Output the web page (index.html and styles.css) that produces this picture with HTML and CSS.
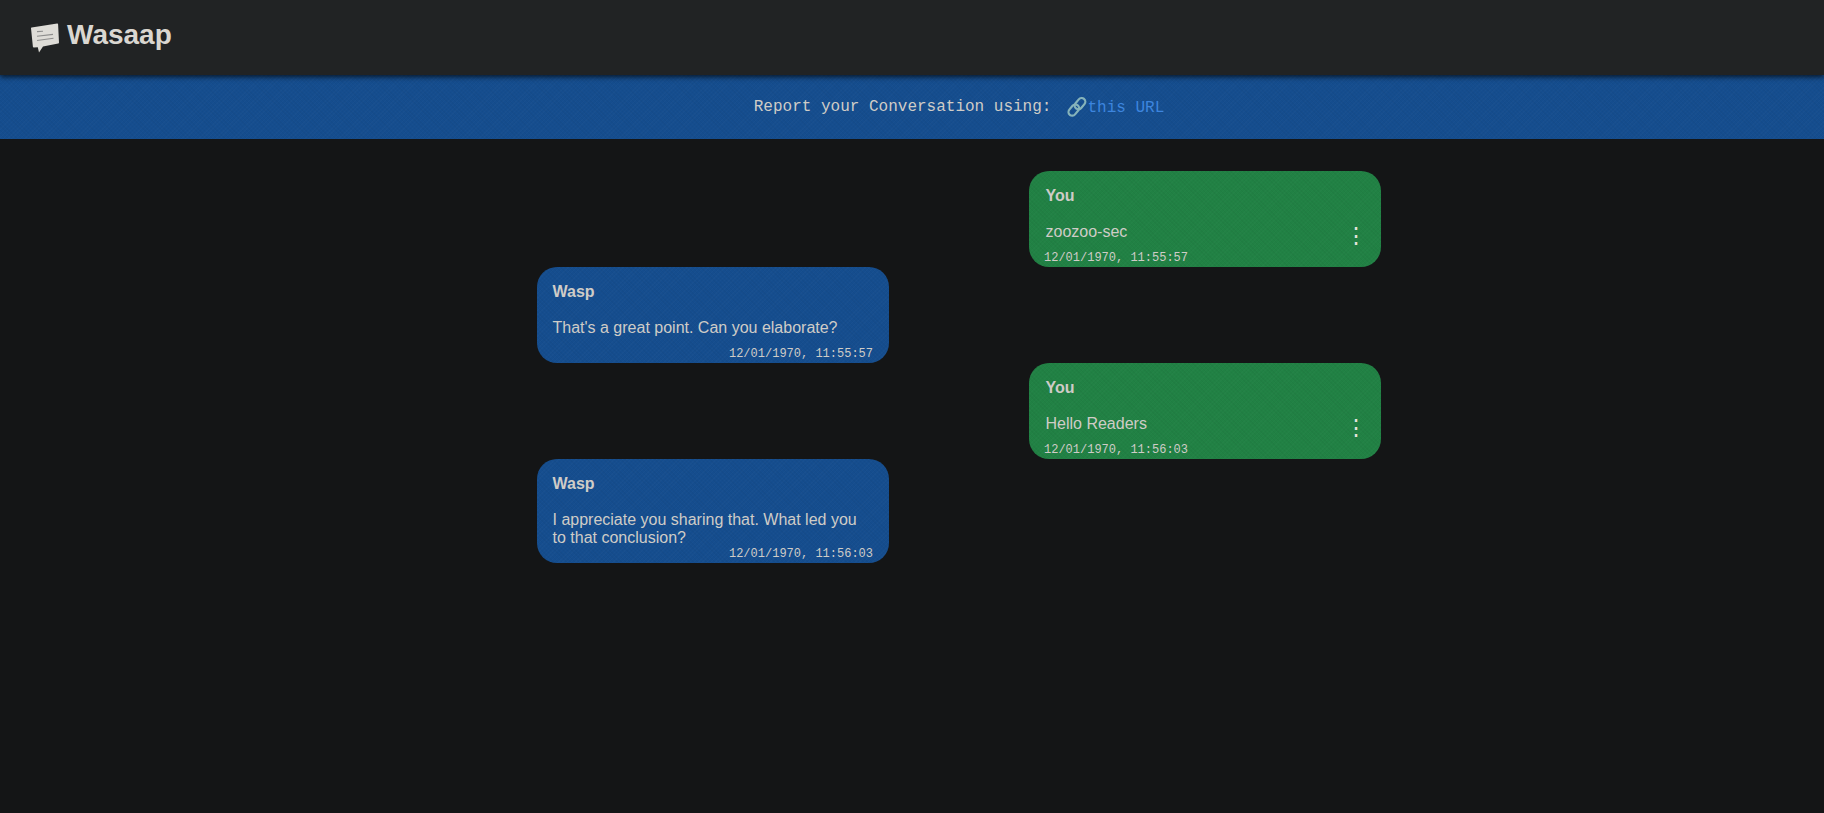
FILE: index.html
```html
<!DOCTYPE html>
<html lang="en">
<head>
<meta charset="utf-8">
<title>Wasaap</title>
<link rel="stylesheet" href="styles.css">
</head>
<body>
<header class="topbar">
  <svg class="logo" width="32" height="32" viewBox="0 0 32 32" aria-hidden="true">
    <path class="logo-fill" d="M2.6 6.4 L28.2 2.6 Q29 2.5 29.1 3.3 L30 21.6 Q30 22.4 29.2 22.5 L14 25.4 L10 31.5 L8.8 26.2 L4.8 26.6 Q4 26.6 3.9 25.8 L2 7.2 Q1.9 6.5 2.6 6.4 Z"/>
    <path class="logo-line" d="M8 10.6 L14 10.2 M8 15.2 L24 13.4 M8 19.5 L24.5 17.2"/>
  </svg>
  <h1 class="brand">Wasaap</h1>
</header>
<div class="banner">
  <span class="banner-text">Report your Conversation using:</span>
  <a class="banner-link" href="#">
    <svg class="link-icon" width="20" height="20" viewBox="0 0 20 20" aria-hidden="true">
      <g class="link-stroke">
        <rect x="0.6" y="9.4" width="12.4" height="7.4" rx="3.7" transform="rotate(-50 6.8 13.1)"/>
        <rect x="6.8" y="3" width="12.4" height="7.4" rx="3.7" transform="rotate(-50 13 6.7)"/>
      </g>
    </svg>this URL</a>
</div>
<main class="chat">
  <article class="msg msg-you">
    <div class="sender">You</div>
    <div class="body-row"><p class="text">zoozoo-sec</p><span class="more">⋮</span></div>
    <time class="stamp">12/01/1970, 11:55:57</time>
  </article>
  <article class="msg msg-wasp">
    <div class="sender">Wasp</div>
    <div class="body-row"><p class="text">That's a great point. Can you elaborate?</p></div>
    <time class="stamp">12/01/1970, 11:55:57</time>
  </article>
  <article class="msg msg-you">
    <div class="sender">You</div>
    <div class="body-row"><p class="text">Hello Readers</p><span class="more">⋮</span></div>
    <time class="stamp">12/01/1970, 11:56:03</time>
  </article>
  <article class="msg msg-wasp">
    <div class="sender">Wasp</div>
    <div class="body-row"><p class="text">I appreciate you sharing that. What led you to that conclusion?</p></div>
    <time class="stamp">12/01/1970, 11:56:03</time>
  </article>
</main>
</body>
</html>
```

FILE: styles.css
```css
* { box-sizing: border-box; }
html, body { height: 100%; }
body {
  margin: 0;
  background: #141516;
  color: #d8d5cf;
  font-family: "Liberation Sans", Arial, sans-serif;
  font-size: 16px;
  overflow: hidden;
}
.topbar {
  height: 75px;
  background: #212324;
  display: flex;
  align-items: center;
  padding: 0 0 5px 29px;
  gap: 6px;
  box-shadow: 0 2px 5px rgba(0, 0, 0, 0.7);
  position: relative;
}
.logo { flex: none; margin-top: 3px; }
.logo-fill { fill: #dedcd7; }
.logo-line { stroke: #8d8d8c; stroke-width: 1.1; fill: none; }
.brand {
  margin: 0;
  font-size: 28px;
  font-weight: 700;
  line-height: 1;
  color: #dad7d1;
}
.banner {
  height: 64px;
  background-color: #154d8e;
  background-image:
    repeating-linear-gradient(45deg, rgba(0, 0, 0, 0.03) 0 1px, transparent 1px 3px),
    repeating-linear-gradient(-45deg, rgba(255, 255, 255, 0.015) 0 1px, transparent 1px 3px);
  font-family: "Liberation Mono", monospace;
  font-size: 16px;
  display: flex;
  justify-content: center;
  align-items: center;
  gap: 16px;
  padding-left: 94px;
  color: #cfccc7;
}
.banner-link {
  display: inline-flex;
  align-items: center;
  color: #3d85de;
  text-decoration: none;
  margin-top: 1px;
}
.link-icon { flex: none; margin-top: -2px; }
.link-stroke rect { fill: none; stroke: #86b3ba; stroke-width: 2.2; }
.chat {
  margin-left: 537px;
  width: 844px;
  padding-top: 32px;
  display: flex;
  flex-direction: column;
}
.msg {
  width: 352px;
  min-height: 96px;
  border-radius: 20px;
  padding: 16px 16px 2px;
  display: flex;
  flex-direction: column;
  color: #cfccc7;
  background-image:
    repeating-linear-gradient(45deg, rgba(0, 0, 0, 0.03) 0 1px, transparent 1px 3px),
    repeating-linear-gradient(-45deg, rgba(255, 255, 255, 0.015) 0 1px, transparent 1px 3px);
}
.msg-you { background-color: #218144; align-self: flex-end; padding-left: 16.5px; }
.msg-wasp { background-color: #154d8e; align-self: flex-start; padding-left: 15.5px; }
.sender { font-weight: 700; line-height: 18px; }
.body-row {
  display: flex;
  justify-content: space-between;
  align-items: flex-start;
  margin-top: 18px;
}
.text { margin: 0; line-height: 18px; max-width: 310px; }
.more {
  font-size: 22px;
  line-height: 22px;
  color: #e6e4df;
  margin: 2px -1.5px -6px 0;
}
.stamp {
  font-family: "Liberation Mono", monospace;
  font-size: 12px;
  line-height: 14px;
  margin-top: auto;
}
.msg-you .stamp { margin-left: -1.5px; }
.msg-wasp .stamp { align-self: flex-end; }
```
